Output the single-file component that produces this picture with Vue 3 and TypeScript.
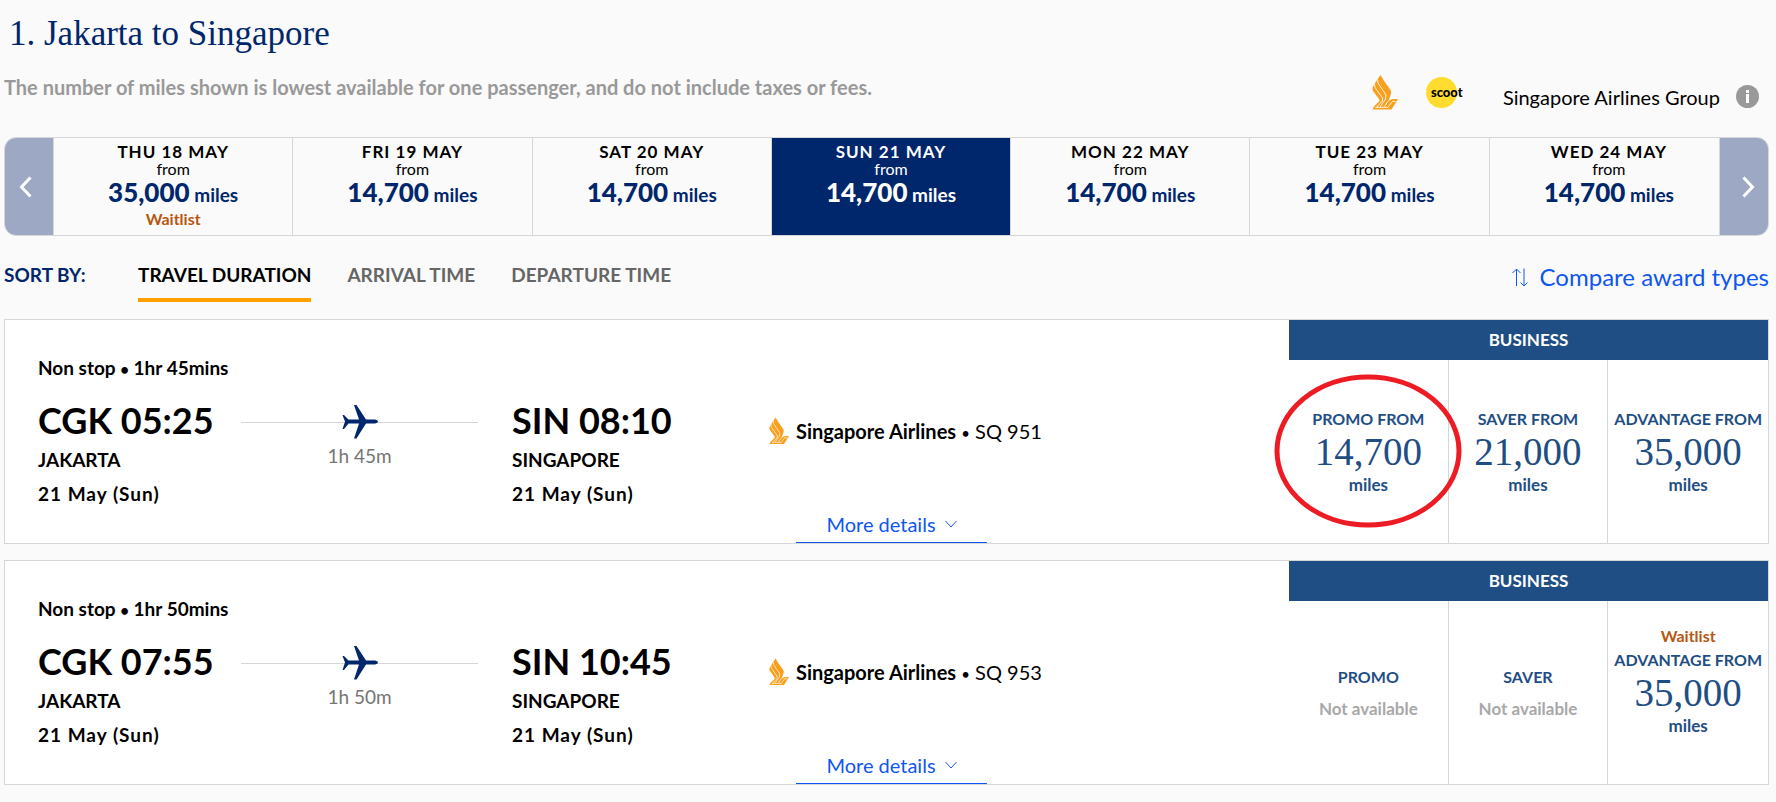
<script setup lang="ts">
interface DayFare {
  label: string
  miles: string
  waitlist?: boolean
  selected?: boolean
}

interface Fare {
  name: string
  miles?: string
  waitlist?: boolean
  circled?: boolean
}

interface Flight {
  number: string
  length: string
  duration: string
  departs: string
  arrives: string
  fares: Fare[]
}

const days: DayFare[] = [
  { label: 'THU 18 MAY', miles: '35,000', waitlist: true },
  { label: 'FRI 19 MAY', miles: '14,700' },
  { label: 'SAT 20 MAY', miles: '14,700' },
  { label: 'SUN 21 MAY', miles: '14,700', selected: true },
  { label: 'MON 22 MAY', miles: '14,700' },
  { label: 'TUE 23 MAY', miles: '14,700' },
  { label: 'WED 24 MAY', miles: '14,700' },
]

const sorts: string[] = ['TRAVEL DURATION', 'ARRIVAL TIME', 'DEPARTURE TIME']

const flights: Flight[] = [
  {
    number: 'SQ 951',
    length: '1hr 45mins',
    duration: '1h 45m',
    departs: 'CGK 05:25',
    arrives: 'SIN 08:10',
    fares: [
      { name: 'PROMO', miles: '14,700', circled: true },
      { name: 'SAVER', miles: '21,000' },
      { name: 'ADVANTAGE', miles: '35,000' },
    ],
  },
  {
    number: 'SQ 953',
    length: '1hr 50mins',
    duration: '1h 50m',
    departs: 'CGK 07:55',
    arrives: 'SIN 10:45',
    fares: [
      { name: 'PROMO' },
      { name: 'SAVER' },
      { name: 'ADVANTAGE', miles: '35,000', waitlist: true },
    ],
  },
]
</script>

<template>
  <main class="page">
    <svg width="0" height="0" class="defs" aria-hidden="true">
      <symbol id="bird" viewBox="0 0 26 35">
        <path fill="#f99f1e" d="M8.500 0 12.500 6.500 18.500 15Q19.500 16.500 19 18.500L16.500 26 19 24.500Q20 24 22 24H26L19.500 34.500H.5L2 31.500 7 26.500Q8 25.500 7 24L1 16Q.3 14.500 .5 12.500L5 5Z" />
        <path fill="none" stroke="#fff3e0" d="M5.500 4.500 6 8l8 12-.5 4L8 32M2.500 8.500 3 12.500 10.500 23v3L4.800 32M16.500 25.500 12.500 31.500M3.500 32.300H16L20.500 26.300H23.500" />
      </symbol>
    </svg>

    <h1>1. Jakarta to Singapore</h1>
    <div class="intro">
      <p>The number of miles shown is lowest available for one passenger, and do not include taxes or fees.</p>
      <div class="group">
        <svg width="26" height="35" role="img" aria-label="Singapore Airlines"><use href="#bird" /></svg>
        <span class="scoot"><b>scoot</b></span>
        <span class="group-name">Singapore Airlines Group</span>
        <button class="info" type="button" aria-label="About Singapore Airlines Group">
          <svg width="23" height="23" viewBox="0 0 23 23">
            <circle cx="11.500" cy="11.500" r="11.500" fill="#999" />
            <path fill="#fff" d="M10 5h3v3h-3z M10 9h3v9h-3z" />
          </svg>
        </button>
      </div>
    </div>

    <div class="dates">
      <button class="arrow" type="button" aria-label="Earlier dates">
        <svg width="13" height="22" viewBox="0 0 13 22"><path d="M11.500 1.500 2.500 11l9 9.500" /></svg>
      </button>
      <div class="viewport">
        <div class="track">
          <button v-for="day in days" :key="day.label" type="button" class="day" :class="{ selected: day.selected }">
            <span class="day-label">{{ day.label }}</span>
            <span class="from">from</span>
            <span class="amount"><b>{{ day.miles }}</b> miles</span>
            <span v-if="day.waitlist" class="waitlist">Waitlist</span>
          </button>
        </div>
      </div>
      <button class="arrow next" type="button" aria-label="Later dates">
        <svg width="13" height="22" viewBox="0 0 13 22"><path d="M1.500 1.500 10.500 11l-9 9.500" /></svg>
      </button>
    </div>

    <div class="toolbar">
      <span class="sort-by">SORT BY:</span>
      <button v-for="(sort, i) in sorts" :key="sort" type="button" class="sort" :class="{ active: i === 0 }">{{ sort }}</button>
      <a class="compare" href="#compare">
        <svg width="16" height="19" viewBox="0 0 16 19"><path d="M4.500 18V1.500M.5 5l4-4 4 4M12 .5V17.500M8.500 14.500l3.500 3.500 3.500-3.500" /></svg>
        Compare award types
      </a>
    </div>

    <article v-for="flight in flights" :key="flight.number" class="flight">
      <section class="info-pane">
        <p class="summary">Non stop <span class="dot">•</span> {{ flight.length }}</p>
        <div class="legs">
          <div class="stop">
            <span class="time">{{ flight.departs }}</span>
            <span>JAKARTA</span>
            <span class="date">21 May (Sun)</span>
          </div>
          <div class="path">
            <div class="line">
              <svg width="36" height="34" viewBox="0 0 36 34">
                <path fill="#00266b" d="M12 0h2.500L24 14.500h9q3 .5 3 2t-3 2h-9L14.500 33.500H12L17 18.500H6.500L2 24H.5L3 16.500 .5 10H2l4.500 4.500H17Z" />
              </svg>
            </div>
            <span class="duration">{{ flight.duration }}</span>
          </div>
          <div class="stop">
            <span class="time">{{ flight.arrives }}</span>
            <span>SINGAPORE</span>
            <span class="date">21 May (Sun)</span>
          </div>
          <div class="carrier">
            <svg width="20" height="28"><use href="#bird" /></svg>
            <span><b>Singapore Airlines</b> <span class="dot">•</span> {{ flight.number }}</span>
          </div>
        </div>
        <button class="more" type="button">
          More details
          <svg width="12" height="8" viewBox="0 0 12 8"><path d="M.5 1 6 7l5.500-6" /></svg>
        </button>
      </section>
      <section class="cabin">
        <h2>BUSINESS</h2>
        <div class="fares">
          <button v-for="fare in flight.fares" :key="fare.name" type="button" class="fare" :disabled="!fare.miles">
            <template v-if="fare.miles">
              <span v-if="fare.waitlist" class="waitlist">Waitlist</span>
              <span>{{ fare.name }} FROM</span>
              <span class="price">{{ fare.miles }}</span>
              <span class="unit">miles</span>
            </template>
            <template v-else>
              <span>{{ fare.name }}</span>
              <span class="unavailable">Not available</span>
            </template>
            <svg v-if="fare.circled" class="ring" width="188" height="154" viewBox="0 0 188 154" aria-hidden="true">
              <ellipse cx="94" cy="77" rx="91" ry="74" />
            </svg>
          </button>
        </div>
      </section>
    </article>
  </main>
</template>

<style>
body {
  margin: 0;
  background: #fafafa;
}
</style>

<style scoped>
* {
  box-sizing: border-box;
}

.page {
  padding: 0 7px 0 4px;
  font-family: Lato, 'Open Sans', sans-serif;
  font-size: 20px;
  line-height: 24px;
  color: #000;
}

.defs {
  position: absolute;
}

button {
  padding: 0;
  border: 0;
  background: none;
  color: inherit;
  font: inherit;
  cursor: pointer;
}

h1,
h2,
p {
  margin: 0;
}

h1 {
  padding: 12px 0 0 5px;
  font: 400 35px/44px 'Liberation Serif', serif;
  color: #00266b;
}

.intro {
  display: flex;
  justify-content: space-between;
  height: 81px;
  padding-top: 19px;
}

.intro p {
  font-weight: 700;
  color: #999;
}

.group {
  display: flex;
  align-items: flex-start;
  padding-right: 10px;
}

.scoot {
  width: 31px;
  height: 31px;
  margin: 2px 46px 0 28px;
  border-radius: 50%;
  background: #ffdc2e;
}

.scoot b {
  display: block;
  padding-left: 5px;
  font: 900 13px/30px Lato, sans-serif;
}

.group-name {
  padding-top: 10px;
}

.info {
  display: flex;
  margin: 10px 0 0 16px;
}

.dates {
  display: flex;
  height: 99px;
  border: 1px solid #d5d6d8;
  border-radius: 12px;
  overflow: hidden;
}

.arrow {
  flex: 0 0 49px;
  display: flex;
  align-items: center;
  justify-content: center;
  padding-right: 8px;
  border-right: 1px solid #d5d6d8;
  background: #9da9c4;
}

.arrow.next {
  padding: 0 0 0 8px;
  border-right: 0;
  border-left: 1px solid #d5d6d8;
}

.arrow path {
  fill: none;
  stroke: #fff;
  stroke-width: 3;
}

.viewport {
  flex: 1;
  overflow: hidden;
}

.track {
  display: grid;
  grid-template-columns: repeat(7, 1fr);
  width: calc(100% + 10px);
  height: 100%;
}

.day {
  display: flex;
  flex-direction: column;
  align-items: center;
  padding-top: 5px;
  border-right: 1px solid #d5d6d8;
}

.day.selected {
  background: #00266b;
  color: #fff;
}

.day-label {
  font-size: 17px;
  font-weight: 700;
  line-height: 18px;
  letter-spacing: 1px;
}

.from {
  font-size: 16px;
  line-height: 16px;
}

.amount {
  font-size: 19px;
  font-weight: 700;
  line-height: 30px;
  color: #00266b;
}

.amount b {
  font-size: 26px;
}

.selected .amount {
  color: #fff;
}

.waitlist {
  font-size: 16px;
  font-weight: 700;
  line-height: 18px;
  color: #b8560f;
}

.toolbar {
  display: flex;
  align-items: flex-start;
  height: 83px;
  padding-top: 27px;
  font-size: 19px;
  font-weight: 700;
}

.sort-by {
  width: 134px;
  color: #00266b;
}

.sort {
  height: 39px;
  margin-right: 36px;
  padding-bottom: 11px;
  border-bottom: 4px solid transparent;
  color: #666;
}

.sort.active {
  border-color: #ffa000;
  color: #000;
}

.compare {
  display: flex;
  align-items: center;
  gap: 12px;
  margin-left: auto;
  font-size: 24px;
  font-weight: 400;
  line-height: 28px;
  color: #0f56f0;
  text-decoration: none;
}

.compare path,
.more path {
  fill: none;
  stroke: #0f56f0;
}

.flight {
  display: grid;
  grid-template-columns: minmax(0, 1fr) 479px;
  min-height: 225px;
  margin-bottom: 16px;
  border: 1px solid #d5d6d8;
  background: #fff;
}

.info-pane {
  display: flex;
  flex-direction: column;
  padding: 36px 0 0 33px;
}

.summary {
  font-size: 19px;
  font-weight: 700;
}

.dot {
  font-size: 15px;
  line-height: 1;
}

.legs {
  display: flex;
  padding-top: 17px;
}

.stop {
  display: flex;
  flex-direction: column;
  width: 203px;
  font-size: 19px;
  font-weight: 700;
  line-height: 34px;
}

.stop .time {
  font-size: 36px;
  line-height: 46px;
}

.date {
  letter-spacing: 1px;
}

.path {
  display: flex;
  flex-direction: column;
  align-items: center;
  width: 237px;
  margin-right: 34px;
}

.line {
  display: flex;
  justify-content: center;
  align-items: center;
  width: 100%;
  height: 50px;
  background: linear-gradient(#d5d6d8, #d5d6d8) center / 100% 1px no-repeat;
}

.duration {
  font-size: 19px;
  line-height: 18px;
  color: #757575;
}

.carrier {
  display: flex;
  align-items: center;
  gap: 7px;
  height: 68px;
  margin-left: 54px;
}

.more {
  display: flex;
  align-items: center;
  justify-content: center;
  gap: 9px;
  width: 191px;
  height: 32px;
  margin: auto 0 0 758px;
  padding-bottom: 6px;
  border-bottom: 1px solid #0f56f0;
  color: #0f56f0;
}

.cabin {
  display: flex;
  flex-direction: column;
}

.cabin h2 {
  background: #1f4e84;
  font-size: 17px;
  font-weight: 700;
  line-height: 40px;
  text-align: center;
  color: #fff;
}

.fares {
  flex: 1;
  display: grid;
  grid-template-columns: repeat(3, 1fr);
}

.fare {
  position: relative;
  display: flex;
  flex-direction: column;
  align-items: center;
  justify-content: center;
  border-right: 1px solid #d5d6d8;
  font-size: 16px;
  font-weight: 700;
  line-height: 24px;
  white-space: nowrap;
  color: #1f4e84;
}

.fare:disabled {
  padding-top: 8px;
}

.fare:last-child {
  border-right: 0;
}

.fare .waitlist {
  margin-top: -24px;
  line-height: 24px;
}

.price {
  font: 400 39px/42px 'Liberation Serif', serif;
}

.unit,
.unavailable {
  font-size: 17px;
}

.unavailable {
  line-height: 40px;
  color: #a8a8a8;
}

.ring {
  position: absolute;
  top: 14px;
  left: -15px;
  z-index: 1;
  pointer-events: none;
}

.ring ellipse {
  fill: none;
  stroke: #ed1c24;
  stroke-width: 5;
}
</style>
